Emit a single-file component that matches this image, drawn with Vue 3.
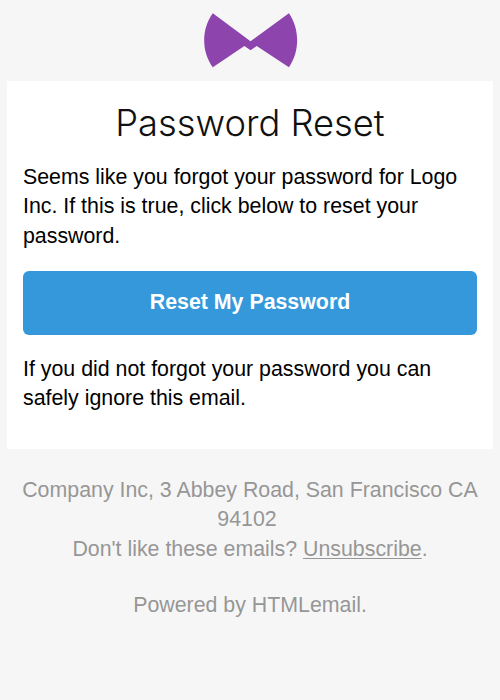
<script setup>
const address = ['Company Inc, 3 Abbey Road, San Francisco CA', '94102\u00a0']
</script>

<template>
  <div class="email">
    <header class="brand">
      <svg class="logo" viewBox="0 0 94 55" role="img" aria-label="Logo">
        <path d="M8.8 0.2 L46.5 28.2 L84.9 0.2 C95.9 16 95.9 38.5 84.9 54.3 L52.7 33 L46.6 37.3 L40.4 33 L8.8 54.3 C-2.7 38.5 -2.7 16 8.8 0.2 Z" fill="#8e44ad" />
      </svg>
    </header>
    <main class="card">
      <h1>Password Reset</h1>
      <p>Seems like you forgot your password for Logo Inc. If this is true, click below to reset your password.</p>
      <a class="button" href="#">Reset My Password</a>
      <p>If you did not forgot your password you can safely ignore this email.</p>
    </main>
    <footer>
      <div v-for="line in address" :key="line">{{ line }}</div>
      <div>Don't like these emails? <a href="#">Unsubscribe</a>.</div>
      <div class="powered">Powered by HTMLemail.</div>
    </footer>
  </div>
</template>

<style>
body {
  background: #f6f6f6;
}
</style>

<style scoped>
.email {
  box-sizing: border-box;
  width: 500px;
  height: 700px;
  overflow: hidden;
  padding: 0 7px;
  background: #f6f6f6;
  color: #000;
  font: 21.35px/29.3px "Liberation Sans", Arial, sans-serif;
}
.brand {
  display: flex;
  justify-content: center;
  padding: 13px 0 13px 1px;
}
.logo {
  display: block;
  width: 94px;
  height: 55px;
}
.card {
  box-sizing: border-box;
  height: 368px;
  padding: 17px 16px 0;
  background: #fff;
}
h1 {
  margin: 0 0 14px;
  font: 300 36.3px/51px Inter, "Liberation Sans", sans-serif;
  text-align: center;
  color: #111;
}
p {
  margin: 0;
}
.button {
  display: block;
  margin: 20px 0;
  border-radius: 6px;
  background: #3498db;
  color: #fff;
  font-weight: 700;
  line-height: 62px;
  padding-bottom: 2px;
  text-align: center;
  text-decoration: none;
}
footer {
  padding-top: 27px;
  color: #969696;
  text-align: center;
  white-space: nowrap;
}
footer a {
  color: inherit;
  text-decoration: underline;
  text-decoration-thickness: 1px;
  text-underline-offset: 2px;
}
.powered {
  margin-top: 27px;
}
</style>
